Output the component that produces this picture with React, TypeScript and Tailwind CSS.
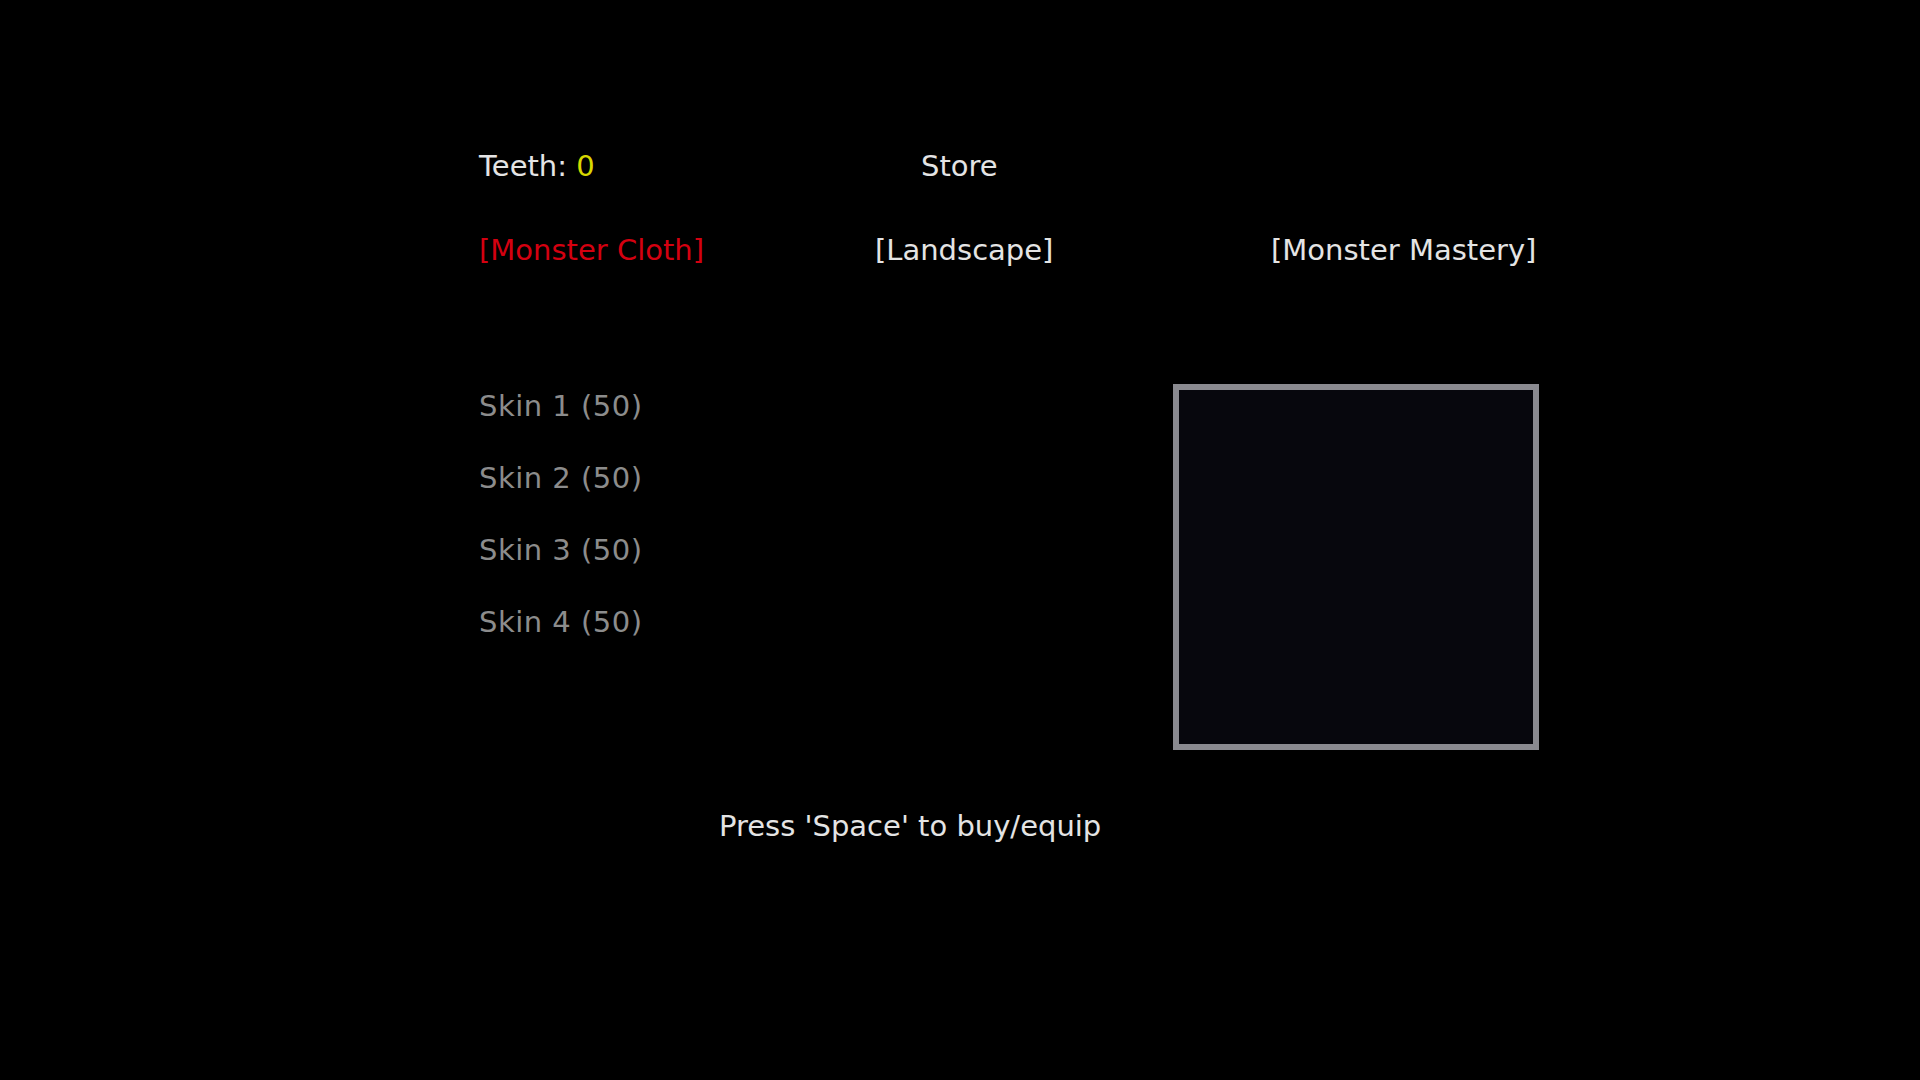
export default function App() {
  const skins = [1, 2, 3, 4];

  return (
    <div className="min-h-[1080px] w-[1920px] bg-black" style={{ fontFamily: '"DejaVu Sans", Verdana, sans-serif' }}>
      <div className="h-[986px] rounded-b-[18px] bg-black pl-[479px] pt-[149px] text-[29px] leading-[34px] text-[#e4e4e4]">
        {/* Header */}
        <div className="flex">
          <div className="w-[442px]">
            Teeth: <span className="text-[#d8d800]">0</span>
          </div>
          <div>Store</div>
        </div>

        {/* Tabs */}
        <div className="mt-[50px] flex">
          <div className="w-[396px] text-[#d40010]">[Monster Cloth]</div>
          <div className="w-[396px]">[Landscape]</div>
          <div>[Monster Mastery]</div>
        </div>

        {/* Skins + preview */}
        <div className="mt-[117px] flex">
          <div className="flex w-[694px] flex-col gap-[38px] pt-[5px] tracking-[0.5px] text-[#8c8c8c]">
            {skins.map((n) => (
              <div key={n}>Skin {n} (50)</div>
            ))}
          </div>
          <div className="h-[366px] w-[366px] border-[6px] border-[#8a8a90] bg-[#07070d]" />
        </div>

        <div className="mt-[59px] pl-[240px]">Press 'Space' to buy/equip</div>
      </div>
    </div>
  );
}
